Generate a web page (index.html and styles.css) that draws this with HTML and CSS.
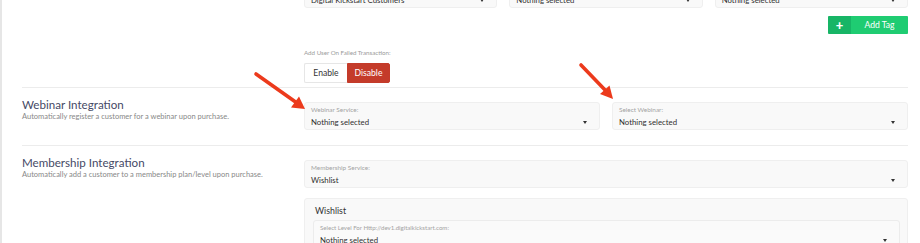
FILE: index.html
```html
<!DOCTYPE html>
<html>
<head>
<meta charset="utf-8">
<link rel="stylesheet" href="styles.css">
</head>
<body>
<div class="page">
  <section class="row row-first">
    <div class="col-left"></div>
    <div class="col-right">
      <div class="tag-grid">
        <div class="select"><span class="sel-label">Tag List:</span><div class="sel-value"><span>Digital Kickstart Customers</span><i class="caret"></i></div></div>
        <div class="select"><span class="sel-label">Tag:</span><div class="sel-value"><span>Nothing selected</span><i class="caret"></i></div></div>
        <div class="select"><span class="sel-label">Tag:</span><div class="sel-value"><span>Nothing selected</span><i class="caret"></i></div></div>
      </div>
      <div class="tag-actions">
        <button class="add-tag"><span class="plus">+</span><span class="add-text">Add Tag</span></button>
      </div>
      <div class="field-label">Add User On Failed Transaction:</div>
      <div class="btn-group">
        <button class="btn btn-enable">Enable</button>
        <button class="btn btn-disable">Disable</button>
      </div>
    </div>
  </section>

  <section class="row row-webinar">
    <div class="col-left">
      <h2 class="sec-title">Webinar Integration</h2>
      <p class="sec-desc">Automatically register a customer for a webinar upon purchase.</p>
    </div>
    <div class="col-right">
      <div class="pair">
        <div class="select"><span class="sel-label">Webinar Service:</span><div class="sel-value"><span>Nothing selected</span><i class="caret"></i></div></div>
        <div class="select"><span class="sel-label">Select Webinar:</span><div class="sel-value"><span>Nothing selected</span><i class="caret"></i></div></div>
      </div>
    </div>
  </section>

  <section class="row row-member">
    <div class="col-left">
      <h2 class="sec-title">Membership Integration</h2>
      <p class="sec-desc">Automatically add a customer to a membership plan/level upon purchase.</p>
    </div>
    <div class="col-right">
      <div class="select"><span class="sel-label">Membership Service:</span><div class="sel-value"><span>Wishlist</span><i class="caret"></i></div></div>
      <div class="panel">
        <div class="panel-title">Wishlist</div>
        <div class="select"><span class="sel-label">Select Level For Http://dev1.digitalkickstart.com:</span><div class="sel-value"><span>Nothing selected</span><i class="caret"></i></div></div>
      </div>
    </div>
  </section>
</div>

<svg class="arrows" width="920" height="243" viewBox="0 0 920 243">
  <g stroke="#ec3a1c" stroke-width="3.6" stroke-linecap="round" fill="#ec3a1c">
    <line x1="256" y1="74" x2="297" y2="103"/>
    <line x1="581" y1="65" x2="607" y2="92"/>
  </g>
  <polygon points="305,109 291,107.5 299,96.5" fill="#ec3a1c"/>
  <polygon points="613,99 600,94 609.5,85.5" fill="#ec3a1c"/>
</svg>
</body>
</html>
```

FILE: styles.css
```css
* { box-sizing: border-box; }
html, body {
  margin: 0;
  padding: 0;
  background: #fff;
  overflow: hidden;
}
body {
  font-family: "Lato", "Noto Sans", sans-serif;
  color: #333;
  width: 920px;
  height: 243px;
  position: relative;
}
.page {
  display: flow-root;
  border-left: 2px solid #e6e6e6;
  height: 243px;
  overflow: hidden;
  padding-left: 20px;
  padding-right: 12px;
}
.row {
  display: flex;
  align-items: flex-start;
}
.col-left {
  width: 282px;
  flex: none;
}
.col-right {
  flex: 1;
  min-width: 0;
}
.row-first {
  margin-top: -20px;
  padding-bottom: 4px;
}
.row-webinar {
  border-top: 1px solid #ececec;
  padding-top: 8px;
  padding-bottom: 15px;
}
.row-webinar .col-right {
  padding-top: 6px;
}
.row-member {
  border-top: 1px solid #ececec;
  padding-top: 8px;
}
.row-member .col-right {
  padding-top: 6px;
}
.tag-grid {
  display: grid;
  grid-template-columns: repeat(3, 1fr);
  column-gap: 12px;
}
.pair {
  display: grid;
  grid-template-columns: 1fr 1fr;
  column-gap: 12px;
}
.select {
  height: 28px;
  background: #f9f9f9;
  border: 1px solid #efefef;
  border-radius: 3px;
  padding: 3px 6px 2px 6px;
  display: flex;
  flex-direction: column;
}
.sel-label {
  font-size: 6.4px;
  line-height: 8px;
  color: #a3a3a3;
  white-space: nowrap;
}
.sel-value {
  margin-top: 2px;
  display: flex;
  align-items: center;
  justify-content: space-between;
  font-size: 7.8px;
  line-height: 12px;
  color: #2f2f2f;
  padding-right: 6px;
}
.caret {
  width: 0;
  height: 0;
  border-left: 2.5px solid transparent;
  border-right: 2.5px solid transparent;
  border-top: 3px solid #333;
}
.tag-actions {
  display: flex;
  justify-content: flex-end;
  margin-top: 8px;
}
.add-tag {
  display: flex;
  height: 18px;
  width: 80px;
  padding: 0;
  border: 0;
  border-radius: 1px;
  overflow: hidden;
  font-family: inherit;
  cursor: pointer;
}
.plus {
  width: 23px;
  background: #17b566;
  color: #fff;
  font-weight: 900;
  font-size: 13px;
  line-height: 18px;
  text-align: center;
}
.add-text {
  flex: 1;
  background: #1fcc72;
  color: #fff;
  font-size: 8.6px;
  line-height: 18px;
  text-align: center;
}
.field-label {
  margin-top: 15px;
  font-size: 6.2px;
  line-height: 8px;
  color: #9a9a9a;
}
.btn-group {
  display: flex;
  margin-top: 6px;
}
.btn {
  height: 20px;
  border: 1px solid #e6e6e6;
  background: #fff;
  font-family: inherit;
  font-size: 8.6px;
  padding: 0;
  color: #333;
}
.btn-enable {
  width: 43px;
  border-radius: 2px 0 0 2px;
  border-right: 0;
}
.btn-disable {
  width: 43px;
  background: #c43b2a;
  border-color: #c43b2a;
  color: #fff;
  border-radius: 0 2px 2px 0;
}
.sec-title {
  margin: 0;
  margin-top: 2px;
  font-weight: 400;
  font-size: 11.6px;
  line-height: 14px;
  color: #464a66;
}
.sec-desc {
  margin: 0;
  font-size: 7.5px;
  line-height: 10px;
  color: #888;
}
.panel {
  margin-top: 10px;
  background: #f9f9f9;
  border: 1px solid #efefef;
  border-radius: 3px;
  padding: 5px 7px 0 8px;
  height: 60px;
}
.panel-title {
  padding-left: 2px;
  font-size: 8.8px;
  line-height: 14px;
  color: #333;
  margin-bottom: 2px;
}
.panel .sel-label {
  font-size: 6.1px;
}
.panel .select {
  background: #fafafa;
  border-color: #ececec;
}
.arrows {
  position: absolute;
  left: 0;
  top: 0;
  pointer-events: none;
}
```
